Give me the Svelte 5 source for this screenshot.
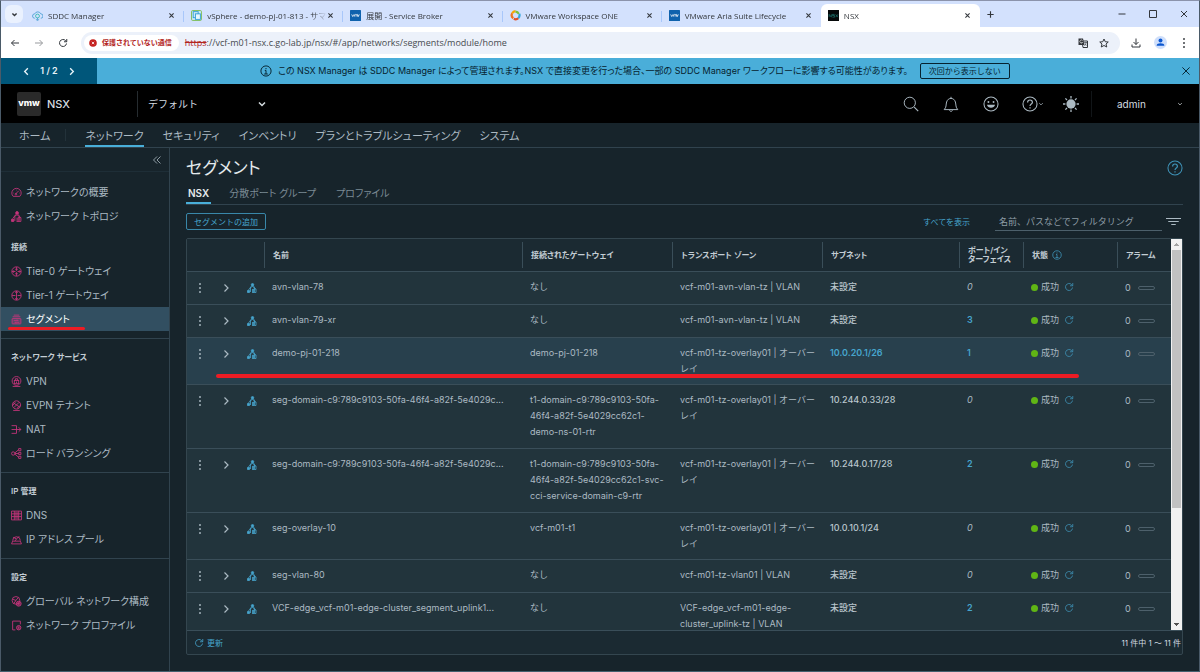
<script lang="ts">
	type Row = {
		name: string;
		gateway: string;
		zone: string;
		subnet: string;
		subnetLink?: boolean;
		ports: number;
		marked?: boolean;
		tall?: boolean;
	};

	const tabs = [
		{ title: 'SDDC Manager', icon: 'cloud' },
		{ title: 'vSphere - demo-pj-01-813 - サマ', icon: 'vsphere' },
		{ title: '展開 - Service Broker', icon: 'vmw' },
		{ title: 'VMware Workspace ONE', icon: 'workspace' },
		{ title: 'VMware Aria Suite Lifecycle', icon: 'vmw' },
		{ title: 'NSX', icon: 'nsx' }
	];

	const sections = [
		{
			label: '',
			items: [
				{ text: 'ネットワークの概要', icon: 'gauge' },
				{ text: 'ネットワーク トポロジ', icon: 'topology' }
			]
		},
		{
			label: '接続',
			items: [
				{ text: 'Tier-0 ゲートウェイ', icon: 'tier0' },
				{ text: 'Tier-1 ゲートウェイ', icon: 'tier1' },
				{ text: 'セグメント', icon: 'segment' }
			]
		},
		{
			label: 'ネットワーク サービス',
			items: [
				{ text: 'VPN', icon: 'vpn' },
				{ text: 'EVPN テナント', icon: 'evpn' },
				{ text: 'NAT', icon: 'nat' },
				{ text: 'ロード バランシング', icon: 'balance' }
			]
		},
		{
			label: 'IP 管理',
			items: [
				{ text: 'DNS', icon: 'dns' },
				{ text: 'IP アドレス プール', icon: 'pool' }
			]
		},
		{
			label: '設定',
			items: [
				{ text: 'グローバル ネットワーク構成', icon: 'global' },
				{ text: 'ネットワーク プロファイル', icon: 'profile' }
			]
		}
	];

	const rows: Row[] = [
		{ name: 'avn-vlan-78', gateway: 'なし', zone: 'vcf-m01-avn-vlan-tz | VLAN', subnet: '未設定', ports: 0 },
		{ name: 'avn-vlan-79-xr', gateway: 'なし', zone: 'vcf-m01-avn-vlan-tz | VLAN', subnet: '未設定', ports: 3 },
		{
			name: 'demo-pj-01-218',
			gateway: 'demo-pj-01-218',
			zone: 'vcf-m01-tz-overlay01 | オーバーレイ',
			subnet: '10.0.20.1/26',
			subnetLink: true,
			ports: 1,
			marked: true
		},
		{
			name: 'seg-domain-c9:789c9103-50fa-46f4-a82f-5e4029c...',
			gateway: 't1-domain-c9:789c9103-50fa-46f4-a82f-5e4029cc62c1-demo-ns-01-rtr',
			zone: 'vcf-m01-tz-overlay01 | オーバーレイ',
			subnet: '10.244.0.33/28',
			ports: 0,
			tall: true
		},
		{
			name: 'seg-domain-c9:789c9103-50fa-46f4-a82f-5e4029c...',
			gateway: 't1-domain-c9:789c9103-50fa-46f4-a82f-5e4029cc62c1-svc-cci-service-domain-c9-rtr',
			zone: 'vcf-m01-tz-overlay01 | オーバーレイ',
			subnet: '10.244.0.17/28',
			ports: 2,
			tall: true
		},
		{ name: 'seg-overlay-10', gateway: 'vcf-m01-t1', zone: 'vcf-m01-tz-overlay01 | オーバーレイ', subnet: '10.0.10.1/24', ports: 0 },
		{ name: 'seg-vlan-80', gateway: 'なし', zone: 'vcf-m01-tz-vlan01 | VLAN', subnet: '未設定', ports: 0 },
		{
			name: 'VCF-edge_vcf-m01-edge-cluster_segment_uplink1...',
			gateway: 'なし',
			zone: 'VCF-edge_vcf-m01-edge-cluster_uplink-tz | VLAN',
			subnet: '未設定',
			ports: 2
		}
	];

	let activeTab = $state(5);
	let activeItem = $state('セグメント');
	let filter = $state('');
	let bannerOpen = $state(true);
</script>

{#snippet icon(name: string)}
	<svg class="icon" viewBox="0 0 20 20" fill="none" stroke="currentColor" stroke-width="1.6" aria-hidden="true">
		{#if name === 'cloud'}
			<path d="M5 15a4 4 0 0 1 0-8 6 6 0 0 1 11 0 4 4 0 0 1 0 8" stroke="#4b9fd5" />
			<circle cx="10" cy="11" r="3.5" stroke="#35b8b0" /><path d="M10 14v4M7 17l3 2 3-2" stroke="#4b9fd5" />
		{:else if name === 'vsphere'}
			<rect x="1" y="1" width="18" height="18" rx="2" fill="#cdeaf7" stroke="#74b84a" />
			<rect x="4" y="3" width="9" height="11" stroke="#2c9bd6" /><rect x="8" y="7" width="9" height="10" fill="#e8f7fd" stroke="#2c9bd6" />
		{:else if name === 'vmw'}
			<rect width="20" height="20" rx="1" fill="#0f62ad" stroke="none" />
			<path d="M3 8l2 4 2-4M8 12V9l2-1 1 1v3M11 9l2-1 1 1v3M14 8l1 4 2-4" stroke="#fff" stroke-width="1.3" />
		{:else if name === 'workspace'}
			<g stroke-width="4"><path d="M4 6a8 8 0 0 1 6-4" stroke="#f7a800" /><path d="M10 3a7 7 0 0 1 6 4" stroke="#7ac143" /><path d="M17 7a8 8 0 0 1-2 8" stroke="#35a7dd" /><path d="M15 15a7 7 0 0 1-8 1" stroke="#e34f26" /><path d="M6 15a7 7 0 0 1-2-9" stroke="#ee7624" /></g>
		{:else if name === 'nsx'}
			<rect width="20" height="20" fill="#06090a" stroke="none" />
			<path d="M2 13V8l4 5V8M12 8H8v2h4v3H8M14 8l4 5M18 8l-4 5" stroke="#207f78" stroke-width="1.2" />
		{:else if name === 'gauge'}
			<path d="M4 17a8.5 8.5 0 1 1 12 0zM9 12l5-5M4 11h1M10 5v1M15 11h1" /><circle cx="9" cy="13" r="1.5" />
		{:else if name === 'topology'}
			<circle cx="11" cy="3.500" r="2.500" fill="currentColor" /><path d="M9 6L3 14M13 6l4 6" />
			<path d="M1 19v-4h4v4z" fill="currentColor" /><path d="M7 18V9l4-2 4 3v8M11 18v-6M10 19h8v-7h-5v7" />
		{:else if name === 'tier0' || name === 'tier1'}
			<circle cx="10" cy="10" r="8.5" />
			{#if name === 'tier0'}<path d="M10 2v6M10 12v6M2 10h6M12 10h6M8 5l2 3 2-3M8 15l2-3 2 3M5 8l-2 2 2 2M15 8l2 2-2 2" />{:else}<path d="M10 2v16M2 10h6M12 10h6M8 5l2-3 2 3M8 15l2 3 2-3" />{/if}
		{:else if name === 'segment'}
			<path d="M5 2h10M3 5h14" /><rect x="2" y="8" width="16" height="10" rx="1" fill="currentColor" fill-opacity=".3" /><path d="M5 12h8l-2-2M15 15H7l2 2" />
		{:else if name === 'vpn'}
			<circle cx="10" cy="9" r="8" /><rect x="6" y="8" width="8" height="6" /><path d="M8 8V5h4v3M10 10v3M3 19h14" />
		{:else if name === 'evpn'}
			<circle cx="10" cy="9" r="7.5" /><path d="M4 5l12 8M15 4L5 14M3 10l5-6M11 15l6-5" /><path d="M4 19h12" />
		{:else if name === 'nat'}
			<path d="M1 3h9v14H1M1 10h17M14 6l4 4-4 4" />
		{:else if name === 'balance'}
			<circle cx="4" cy="10" r="3" /><path d="M7 9l7-6M7 10h7M7 11l7 6" /><path d="M14 1h4v4h-4zM14 8h4v4h-4zM14 15h4v4h-4z" />
		{:else if name === 'dns'}
			<path d="M1 2h18v16H1zM1 7h18M1 12h18M6 2v16M14 2v16" /><path d="M7 3h6v14H7z" fill="currentColor" fill-opacity=".5" stroke="none" />
		{:else if name === 'pool'}
			<path d="M3 12a7 7 0 1 1 14 0M4 6l6 3 5-5M10 9l-3 4" /><path d="M3 13h14l2 5H1z" />
		{:else if name === 'global'}
			<circle cx="9" cy="8" r="7" /><path d="M3 6l6 2 4-5M9 8l-4 6" /><circle cx="14" cy="14" r="4.5" fill="currentColor" fill-opacity=".5" /><path d="M12 14h4M14 12v4" />
		{:else if name === 'profile'}
			<path d="M17 8V2H3v16h5" /><circle cx="14" cy="14" r="4" fill="currentColor" fill-opacity=".4" /><path d="M14 12v4" />
		{:else if name === 'back'}
			<path d="M18 10H3M9 4l-6 6 6 6" />
		{:else if name === 'forward'}
			<path d="M2 10h15M11 4l6 6-6 6" />
		{:else if name === 'reload'}
			<path d="M17 11a7 7 0 1 1-2-6l2 2M17.500 2v5.500H12" />
		{:else if name === 'close'}
			<path d="M4 4l12 12M16 4L4 16" />
		{:else if name === 'plus'}
			<path d="M10 3v14M3 10h14" />
		{:else if name === 'minimize'}
			<path d="M3 10h14" />
		{:else if name === 'maximize'}
			<path d="M3 3h14v14H3z" />
		{:else if name === 'down'}
			<path d="M4 7l6 6 6-6" />
		{:else if name === 'left'}
			<path d="M13 3l-7 7 7 7" />
		{:else if name === 'right'}
			<path d="M7 3l7 7-7 7" />
		{:else if name === 'collapse'}
			<path d="M10 3l-7 7 7 7M17 3l-7 7 7 7" />
		{:else if name === 'translate'}
			<path d="M8 6h11v13H10z" /><path d="M1 1h9l3 13H1z" fill="currentColor" stroke="none" />
			<path d="M9 5a3 3 0 1 0 0 4H7" stroke="#fff" stroke-width="1.3" /><path d="M12 9h6M15 8v1M17 9l-4 7M14 11l3 4" stroke-width="1.2" />
		{:else if name === 'star'}
			<path d="M10 2l2.500 5.500 6 .5-4.500 4 1.500 6L10 15l-5.500 3L6 12 1.500 8l6-.5z" />
		{:else if name === 'download'}
			<path d="M10 1v12M5 8l5 5 5-5M2 13v5h16v-5" stroke-width="2" />
		{:else if name === 'person'}
			<circle cx="10" cy="10" r="10" fill="#cfdffb" stroke="none" /><circle cx="10" cy="7" r="3" fill="#0b57d0" stroke="none" /><path d="M4 15c0-5 12-5 12 0z" fill="#0b57d0" stroke="none" />
		{:else if name === 'dots'}
			<g fill="currentColor" stroke="none"><circle cx="10" cy="2" r="1.900" /><circle cx="10" cy="10" r="1.900" /><circle cx="10" cy="18" r="1.900" /></g>
		{:else if name === 'denied'}
			<circle cx="10" cy="10" r="9.500" fill="#c5221f" stroke="none" /><path d="M7 7l6 6M13 7l-6 6" stroke="#fff" stroke-width="2" />
		{:else if name === 'info'}
			<circle cx="10" cy="10" r="8.500" /><path d="M8 9h2v6M7 15h6M10 5v2" />
		{:else if name === 'search'}
			<circle cx="8.500" cy="8.500" r="7" stroke-width="1.200" /><path d="M14 14l5 5" stroke-width="1.400" />
		{:else if name === 'bell'}
			<path d="M1.500 17c3-3 2-6 3-9.500C5.500 4.500 7.500 3 10 3s4.500 1.500 5.500 4.500c1 3.500 0 6.500 3 9.500zM10 3V1M8 18c1 1.500 3 1.500 4 0" stroke-width="1.200" />
		{:else if name === 'smile'}
			<circle cx="10" cy="10" r="8.800" stroke-width="1.300" /><circle cx="6.800" cy="7.500" r="1.200" fill="currentColor" stroke="none" /><circle cx="13.200" cy="7.500" r="1.200" fill="currentColor" stroke="none" /><path d="M5 11h10c-.5 5-9.500 5-10 0z" fill="currentColor" stroke="none" />
		{:else if name === 'help'}
			<circle cx="10" cy="10" r="8.800" stroke-width="1.300" /><path d="M7 8c0-4 6-4 6 0 0 2-3 2-3 4.500M10 14v1.500" stroke-width="1.500" />
		{:else if name === 'sun'}
			<circle cx="10" cy="10" r="5.800" fill="currentColor" stroke="none" /><path d="M10 0v3M10 17v3M0 10h3M17 10h3M3 3l2 2M15 15l2 2M17 3l-2 2M5 15l-2 2" />
		{:else if name === 'filter'}
			<path d="M0 6h20M3 10h14M7 14h6" />
		{/if}
	</svg>
{/snippet}

<div class="window">
	<div class="tabstrip">
		<button class="tab-search" aria-label="タブを検索">{@render icon('down')}</button>
		<div class="tabs">
			{#each tabs as tab, i}
				<div class="tab" class:active={i === activeTab}>
					<span class="favicon">{@render icon(tab.icon)}</span>
					<button class="tab-title" onclick={() => (activeTab = i)}>{tab.title}</button>
					<button class="tab-close" aria-label="閉じる">{@render icon('close')}</button>
				</div>
			{/each}
		</div>
		<button class="tab-new" aria-label="新しいタブ">{@render icon('plus')}</button>
		<div class="window-controls">
			<button aria-label="最小化">{@render icon('minimize')}</button>
			<button aria-label="最大化">{@render icon('maximize')}</button>
			<button aria-label="閉じる">{@render icon('close')}</button>
		</div>
	</div>

	<div class="toolbar">
		<button aria-label="戻る">{@render icon('back')}</button>
		<button class="faded" aria-label="進む">{@render icon('forward')}</button>
		<button aria-label="再読み込み">{@render icon('reload')}</button>
		<div class="omnibox">
			<button class="security">{@render icon('denied')}保護されていない通信</button>
			<label class="url">
				<s>https</s>
				<input aria-label="アドレス" value="://vcf-m01-nsx.c.go-lab.jp/nsx/#/app/networks/segments/module/home" />
			</label>
			<button aria-label="翻訳">{@render icon('translate')}</button>
			<button aria-label="ブックマーク">{@render icon('star')}</button>
		</div>
		<button aria-label="ダウンロード">{@render icon('download')}</button>
		<button class="profile" aria-label="プロファイル">{@render icon('person')}</button>
		<button aria-label="メニュー">{@render icon('dots')}</button>
	</div>

	{#if bannerOpen}
		<div class="banner">
			<div class="pager">
				<button aria-label="前へ">{@render icon('left')}</button>
				<span>1 / 2</span>
				<button aria-label="次へ">{@render icon('right')}</button>
			</div>
			<div class="message">
				{@render icon('info')}
				<span>この NSX Manager は SDDC Manager によって管理されます。NSX で直接変更を行った場合、一部の SDDC Manager ワークフローに影響する可能性があります。</span>
				<button class="dismiss">次回から表示しない</button>
			</div>
			<button class="banner-close" aria-label="閉じる" onclick={() => (bannerOpen = false)}>{@render icon('close')}</button>
		</div>
	{/if}

	<header>
		<div class="brand">
			<span class="logo">vmw</span>
			<span class="product">NSX</span>
		</div>
		<div class="project">
			<select aria-label="プロジェクト"><option>デフォルト</option></select>
			{@render icon('down')}
		</div>
		<div class="header-actions">
			<button aria-label="検索">{@render icon('search')}</button>
			<button aria-label="通知">{@render icon('bell')}</button>
			<button aria-label="フィードバック">{@render icon('smile')}</button>
			<button class="help" aria-label="ヘルプ">{@render icon('help')}<span class="caret">{@render icon('down')}</span></button>
			<button aria-label="テーマ">{@render icon('sun')}</button>
		</div>
		<button class="user">admin <span class="caret">{@render icon('down')}</span></button>
	</header>

	<nav class="main-nav">
		<a class="home" href="#home">ホーム</a>
		<a class="current" href="#network">ネットワーク</a>
		<a href="#security">セキュリティ</a>
		<a href="#inventory">インベントリ</a>
		<a href="#plan">プランとトラブルシューティング</a>
		<a href="#system">システム</a>
	</nav>

	<div class="body">
		<aside>
			<div class="collapse"><button aria-label="折りたたむ">{@render icon('collapse')}</button></div>
			{#each sections as section, i}
				<section class:plain={i < 1}>
					{#if section.label}<h2>{section.label}</h2>{/if}
					{#each section.items as item}
						<a
							class="item"
							class:selected={item.text === activeItem}
							href="#{item.icon}"
							onclick={() => (activeItem = item.text)}
						>
							{@render icon(item.icon)}<span>{item.text}</span>
						</a>
					{/each}
				</section>
			{/each}
		</aside>

		<main>
			<div class="title">
				<h1>セグメント</h1>
				<button aria-label="ヘルプ">{@render icon('help')}</button>
			</div>
			<div class="subtabs">
				<button class="current">NSX</button>
				<button>分散ポート グループ</button>
				<button>プロファイル</button>
			</div>
			<div class="tools">
				<button class="add">セグメントの追加</button>
				<button class="show-all">すべてを表示</button>
				<input bind:value={filter} aria-label="フィルタ" placeholder="名前、パスなどでフィルタリング" />
				<button class="filter" aria-label="フィルタ">{@render icon('filter')}</button>
			</div>

			<div class="grid">
				<div class="viewport">
					<div class="scroller">
						<table>
							<colgroup>
								<col class="c-actions" /><col /><col class="c-gateway" /><col class="c-gateway" />
								<col class="c-subnet" /><col class="c-ports" /><col class="c-status" /><col class="c-alarm" />
							</colgroup>
							<thead>
								<tr>
									<th aria-label="操作"></th>
									<th><span>名前</span></th>
									<th><span>接続されたゲートウェイ</span></th>
									<th><span>トランスポート ゾーン</span></th>
									<th><span>サブネット</span></th>
									<th><span>ポート/イン<br />ターフェイス</span></th>
									<th><span>状態 <i class="hint">{@render icon('info')}</i></span></th>
									<th><span>アラーム</span></th>
								</tr>
							</thead>
							<tbody>
								{#each rows as row}
									<tr class:marked={row.marked} class:tall={row.tall}>
										<td class="actions">
											<div>
												<button aria-label="メニュー">{@render icon('dots')}</button>
												<button aria-label="展開">{@render icon('right')}</button>
												<span class="kind">{@render icon('topology')}</span>
											</div>
											{#if row.marked}<span class="underline"></span>{/if}
										</td>
										<td>{row.name}</td>
										<td>{row.gateway}</td>
										<td>{row.zone}</td>
										<td class="strong">
											{#if row.subnetLink}<a href="#subnet">{row.subnet}</a>{:else}{row.subnet}{/if}
										</td>
										<td>
											{#if row.ports}<a href="#ports">{row.ports}</a>{:else}<em>0</em>{/if}
										</td>
										<td>
											<div class="status"><span class="dot"></span>成功<button aria-label="更新">{@render icon('reload')}</button></div>
										</td>
										<td><div class="alarm">0<span class="pill"></span></div></td>
									</tr>
								{/each}
							</tbody>
						</table>
					</div>
					<div class="scrollbar">
						<span class="arrow"></span>
						<span class="thumb"></span>
						<span class="arrow down"></span>
					</div>
				</div>
				<footer>
					<button>{@render icon('reload')}更新</button>
					<span>11 件中 1 ～ 11 件</span>
				</footer>
			</div>
		</main>
	</div>
</div>

<style>
	:global(body) {
		background: #17242b;
	}

	.window {
		box-sizing: border-box;
		height: 100vh;
		display: flex;
		flex-direction: column;
		overflow: hidden;
		border: 1px solid #4a5a68;
		border-top-color: #8b93ab;
		border-bottom-color: #44606f;
		font-family: Inter, 'Noto Sans CJK JP', sans-serif;
		font-size: 9px;
		line-height: 16px;
		color: #acbac3;
	}

	.window * {
		box-sizing: border-box;
	}

	button,
	input,
	select {
		margin: 0;
		padding: 0;
		border: 0;
		background: none;
		color: inherit;
		font: inherit;
		outline: none;
	}

	button {
		display: flex;
		align-items: center;
		justify-content: center;
		white-space: nowrap;
	}

	a {
		color: inherit;
		text-decoration: none;
	}

	.icon {
		width: 10px;
		height: 10px;
		flex: none;
		display: block;
	}

	/* browser chrome */
	.tabstrip,
	.toolbar {
		font-family: 'Open Sans', 'Noto Sans CJK JP', sans-serif;
		color: #33373c;
		display: flex;
		align-items: center;
		flex: none;
	}

	.tabstrip {
		height: 26px;
		padding-left: 4px;
		background: #d3e1fd;
	}

	.tab-search {
		width: 18px;
		height: 18px;
		border-radius: 6px;
		background: #eaf1fe;
	}

	.tab-search .icon {
		width: 7px;
		height: 7px;
		stroke-width: 4;
	}

	.tabs {
		display: flex;
		flex: 0 1 957px;
		height: 100%;
		padding-left: 2px;
		font-size: 8px;
		min-width: 0;
	}

	.tab {
		flex: 1;
		min-width: 0;
		display: flex;
		align-items: center;
		margin-top: 3px;
		padding: 0 9px 0 7px;
		background: linear-gradient(#a8c7fa, #a8c7fa) right 7px / 1px 11px no-repeat;
	}

	.tab:nth-child(5) {
		background: none;
	}

	.tab.active {
		background: #fff;
		border-radius: 6px 6px 0 0;
	}

	.favicon .icon {
		width: 11px;
		height: 11px;
	}

	.tab-title {
		flex: 1;
		min-width: 0;
		padding-left: 5px;
		justify-content: flex-start;
		text-align: left;
		mask-image: linear-gradient(to left, transparent, #000 14px);
	}

	.tab-close .icon {
		width: 7px;
		height: 7px;
		stroke-width: 3;
	}

	.tab-new {
		width: 20px;
	}

	.tab-new .icon {
		width: 9px;
		height: 9px;
		stroke-width: 2.5;
	}

	.window-controls {
		display: flex;
		margin-left: auto;
	}

	.window-controls button {
		width: 31px;
	}

	.window-controls .icon {
		width: 10px;
		height: 10px;
		stroke-width: 2;
	}

	.toolbar {
		height: 31px;
		padding: 0 3px 0 2px;
		background: #fff;
	}

	.toolbar .icon {
		stroke-width: 2;
	}

	.toolbar > button {
		width: 24px;
		height: 24px;
		flex: none;
	}

	.toolbar > .faded {
		opacity: 0.5;
	}

	.toolbar .profile .icon {
		width: 13px;
		height: 13px;
	}

	.omnibox {
		flex: 1;
		display: flex;
		align-items: center;
		height: 22px;
		margin: 0 4px 0 6px;
		padding: 0 6px 0 3px;
		border-radius: 11px;
		background: #ecf1fa;
	}

	.omnibox > button {
		width: 21px;
	}

	.omnibox > .security {
		width: auto;
		height: 16px;
		gap: 5px;
		padding: 0 7px 0 5px;
		border-radius: 8px;
		background: #fff;
		color: #b3261e;
		font-weight: 700;
		font-size: 7px;
	}

	.security .icon {
		width: 8px;
		height: 8px;
	}

	.url {
		flex: 1;
		display: flex;
		padding-left: 6px;
	}

	.url s {
		color: #b3261e;
	}

	.url input {
		flex: 1;
		color: #474b50;
	}

	/* banner */
	.banner {
		flex: none;
		display: flex;
		align-items: stretch;
		height: 26px;
		background: #4aaed9;
		color: #06222f;
	}

	.pager {
		width: 96px;
		display: flex;
		align-items: center;
		justify-content: center;
		gap: 9px;
		background: #00567a;
		color: #e8f3f8;
		font-weight: 600;
	}

	.pager .icon {
		width: 9px;
		height: 9px;
		stroke-width: 3;
	}

	.message {
		flex: 1;
		display: flex;
		align-items: center;
		justify-content: center;
		gap: 6px;
		white-space: nowrap;
		font-feature-settings: 'palt';
	}

	.message .icon {
		width: 12px;
		height: 12px;
	}

	.dismiss {
		height: 16px;
		margin-left: 6px;
		padding: 0 8px;
		border: 1px solid #06222f;
		border-radius: 2px;
		font-size: 8px;
		font-feature-settings: normal;
	}

	.banner-close {
		width: 26px;
	}

	.banner-close .icon {
		width: 12px;
		height: 12px;
	}

	/* product header */
	header {
		flex: none;
		display: flex;
		align-items: center;
		height: 39px;
		background: #000;
		color: #d5dce0;
	}

	.brand {
		display: flex;
		align-items: center;
		gap: 6px;
		width: 136px;
		padding-left: 16px;
	}

	.logo {
		width: 24px;
		height: 24px;
		border-radius: 2px;
		background: #2a2a2a;
		color: #fff;
		font-weight: 800;
		line-height: 22px;
		text-align: center;
	}

	.product {
		font-size: 11px;
		font-weight: 500;
	}

	.project {
		display: flex;
		align-items: center;
		width: 130px;
		height: 26px;
		padding-left: 10px;
		border-left: 1px solid #262c30;
		font-size: 10px;
	}

	.project select {
		flex: 1;
		appearance: none;
	}

	.project .icon {
		stroke-width: 3;
	}

	.header-actions {
		display: flex;
		margin-left: auto;
		color: #acbac3;
	}

	.header-actions button {
		width: 40px;
	}

	.header-actions .help {
		padding-left: 4px;
	}

	.header-actions .icon {
		width: 16px;
		height: 16px;
	}

	header .caret .icon {
		width: 6px;
		height: 6px;
		stroke-width: 2.5;
	}

	.user {
		width: 108px;
		height: 26px;
		padding: 0 16px 0 25px;
		border-left: 1px solid #111518;
		justify-content: space-between;
		font-size: 10px;
	}

	.main-nav {
		flex: none;
		display: flex;
		gap: 19px;
		height: 25px;
		padding-left: 18px;
		border-bottom: 1px solid #31434e;
		font-size: 11px;
		line-height: 24px;
		font-feature-settings: 'palt';
		white-space: nowrap;
	}

	.main-nav a {
		padding-top: 1px;
	}

	.main-nav .home {
		padding-right: 16px;
		background: linear-gradient(#23323a, #23323a) right center / 1px 12px no-repeat;
	}

	.main-nav .current {
		box-shadow: inset 0 -2px #49afd9;
	}

	.body {
		flex: 1;
		min-height: 0;
		display: flex;
	}

	/* side navigation */
	aside {
		flex: none;
		width: 169px;
		border-right: 1px solid #31434e;
		font-size: 10px;
	}

	.collapse {
		display: flex;
		justify-content: flex-end;
		height: 24px;
		margin-bottom: 2px;
		padding: 0 7px 0 0;
		border-bottom: 1px solid #1e2e37;
	}

	section {
		padding: 6px 0 7px;
		border-bottom: 1px solid #31434e;
	}

	section.plain {
		padding-bottom: 1px;
		border-bottom: 0;
	}

	section:last-child {
		border-bottom: 0;
	}

	h2 {
		margin: 0;
		padding-left: 10px;
		font-size: 8px;
		line-height: 24px;
		font-weight: 600;
		color: #c3cdd4;
		font-feature-settings: 'palt';
	}

	.item {
		display: flex;
		align-items: center;
		gap: 4px;
		height: 24px;
		padding-left: 10px;
		white-space: nowrap;
		font-feature-settings: 'palt';
	}

	.item .icon {
		width: 11px;
		height: 11px;
		color: #c5347b;
	}

	.selected {
		position: relative;
		background: #324f61;
		color: #fff;
	}

	.selected::after {
		content: '';
		position: absolute;
		left: 7px;
		bottom: 1px;
		width: 77px;
		height: 3px;
		border-radius: 2px;
		background: #ed1c24;
	}

	/* content */
	main {
		flex: 1;
		min-width: 0;
		display: flex;
		flex-direction: column;
		padding: 8px 16px 16px;
	}

	.title {
		display: flex;
		justify-content: space-between;
		align-items: center;
		height: 24px;
	}

	h1 {
		margin: 0;
		font-size: 17px;
		line-height: 24px;
		font-weight: 400;
		color: #e4eaed;
		font-feature-settings: 'palt';
	}

	.title button {
		color: #3f93b8;
	}

	.title .icon {
		width: 16px;
		height: 16px;
	}

	.subtabs {
		display: flex;
		gap: 16px;
		height: 25px;
		border-bottom: 1px solid #31434e;
		font-size: 10px;
		color: #7b8a94;
	}

	.subtabs button {
		padding: 2px 2px 0;
		font-feature-settings: 'palt';
	}

	.subtabs .current {
		box-shadow: inset 0 -2px #49afd9;
		color: #e4eaed;
		font-weight: 600;
	}

	.tools {
		display: flex;
		align-items: center;
		height: 33px;
	}

	.add {
		height: 17px;
		padding: 0 7px;
		border: 1px solid #3987a9;
		border-radius: 2px;
		color: #46a5cd;
		font-size: 8px;
	}

	.show-all {
		margin-left: auto;
		color: #46a5cd;
		font-size: 8px;
	}

	.tools input {
		width: 167px;
		height: 18px;
		margin: 0 4px 0 25px;
		padding-left: 4px;
		border-bottom: 1px solid #4d606b;
	}

	.tools input::placeholder {
		color: #8e9ca5;
		opacity: 1;
	}

	.filter {
		padding-right: 2px;
		color: #acbac3;
	}

	.filter .icon {
		width: 15px;
		height: 15px;
	}

	.grid {
		flex: 1;
		min-height: 0;
		display: flex;
		flex-direction: column;
		border: 1px solid #34464f;
		border-radius: 2px;
		background: #1b2a32;
	}

	.viewport {
		flex: 1;
		min-height: 0;
		display: flex;
		background: #22343c;
	}

	.scroller {
		flex: 1;
		min-width: 0;
		overflow: hidden;
	}

	table {
		width: 100%;
		table-layout: fixed;
		border-collapse: separate;
		border-spacing: 0;
	}

	.c-actions {
		width: 77px;
	}

	.c-gateway {
		width: 150px;
	}

	.c-subnet {
		width: 137px;
	}

	.c-ports {
		width: 64px;
	}

	.c-status {
		width: 94px;
	}

	.c-alarm {
		width: 54px;
	}

	th {
		height: 33px;
		padding: 3px 0;
		background: #1b2a32;
		border-bottom: 1px solid #3a4e59;
		text-align: left;
		font-size: 8px;
		line-height: 9px;
		font-weight: 600;
		color: #c3cdd4;
	}

	th span {
		display: flex;
		align-items: center;
		height: 26px;
		padding-left: 8px;
		border-left: 1px solid #3a4e59;
		font-feature-settings: 'palt';
		white-space: nowrap;
	}

	th:nth-child(6) span {
		display: block;
		padding-top: 4px;
	}

	th .hint {
		margin-left: 4px;
		color: #3f93b8;
	}

	td {
		height: 33px;
		padding: 7px 4px 7px 8px;
		vertical-align: top;
		border-bottom: 1px solid #3a4e59;
		overflow-wrap: break-word;
	}

	td:nth-child(2) {
		white-space: nowrap;
	}

	tr.tall td {
		height: 64px;
	}

	tr.marked {
		position: relative;
		background: #28404d;
	}

	.underline {
		position: absolute;
		left: 29px;
		right: 92px;
		bottom: 7px;
		height: 4px;
		border-radius: 2px;
		background: #ed1c24;
	}

	td a {
		color: #46a5cd;
		font-weight: 600;
	}

	td.strong {
		font-weight: 500;
		color: #bac6cd;
	}

	.actions div {
		display: flex;
		align-items: center;
		gap: 16px;
		height: 18px;
	}

	.kind {
		color: #46a5cd;
	}

	.actions .icon {
		stroke-width: 2.4;
	}

	.actions .kind .icon {
		stroke-width: 1.6;
	}

	.status,
	.alarm {
		display: flex;
		align-items: center;
		gap: 3px;
	}

	.dot {
		width: 7px;
		height: 7px;
		border-radius: 50%;
		background: #60b515;
	}

	.status button {
		margin-left: 2px;
		color: #3f93b8;
	}

	.alarm {
		gap: 7px;
		height: 18px;
	}

	.pill {
		width: 17px;
		height: 4px;
		border: 1px solid #4d606b;
		border-radius: 2px;
	}

	.scrollbar {
		flex: none;
		width: 11px;
		display: flex;
		flex-direction: column;
		background: #f1f1f1;
	}

	.arrow {
		height: 11px;
		background: conic-gradient(from 135deg at 50% 0, #a3a3a3 90deg, transparent 0) center / 5px 3px no-repeat;
	}

	.arrow.down {
		margin-top: auto;
		background-image: conic-gradient(from -45deg at 50% 100%, #505050 90deg, transparent 0);
	}

	.thumb {
		height: 66%;
		margin: 0 1px;
		background: #c1c1c1;
	}

	footer {
		flex: none;
		display: flex;
		justify-content: space-between;
		align-items: center;
		height: 24px;
		padding: 0 1px 0 7px;
		border-top: 1px solid #3a4e59;
		font-size: 8px;
	}

	footer button {
		gap: 3px;
		color: #46a5cd;
	}

	footer span {
		color: #d3dbe0;
	}
</style>
